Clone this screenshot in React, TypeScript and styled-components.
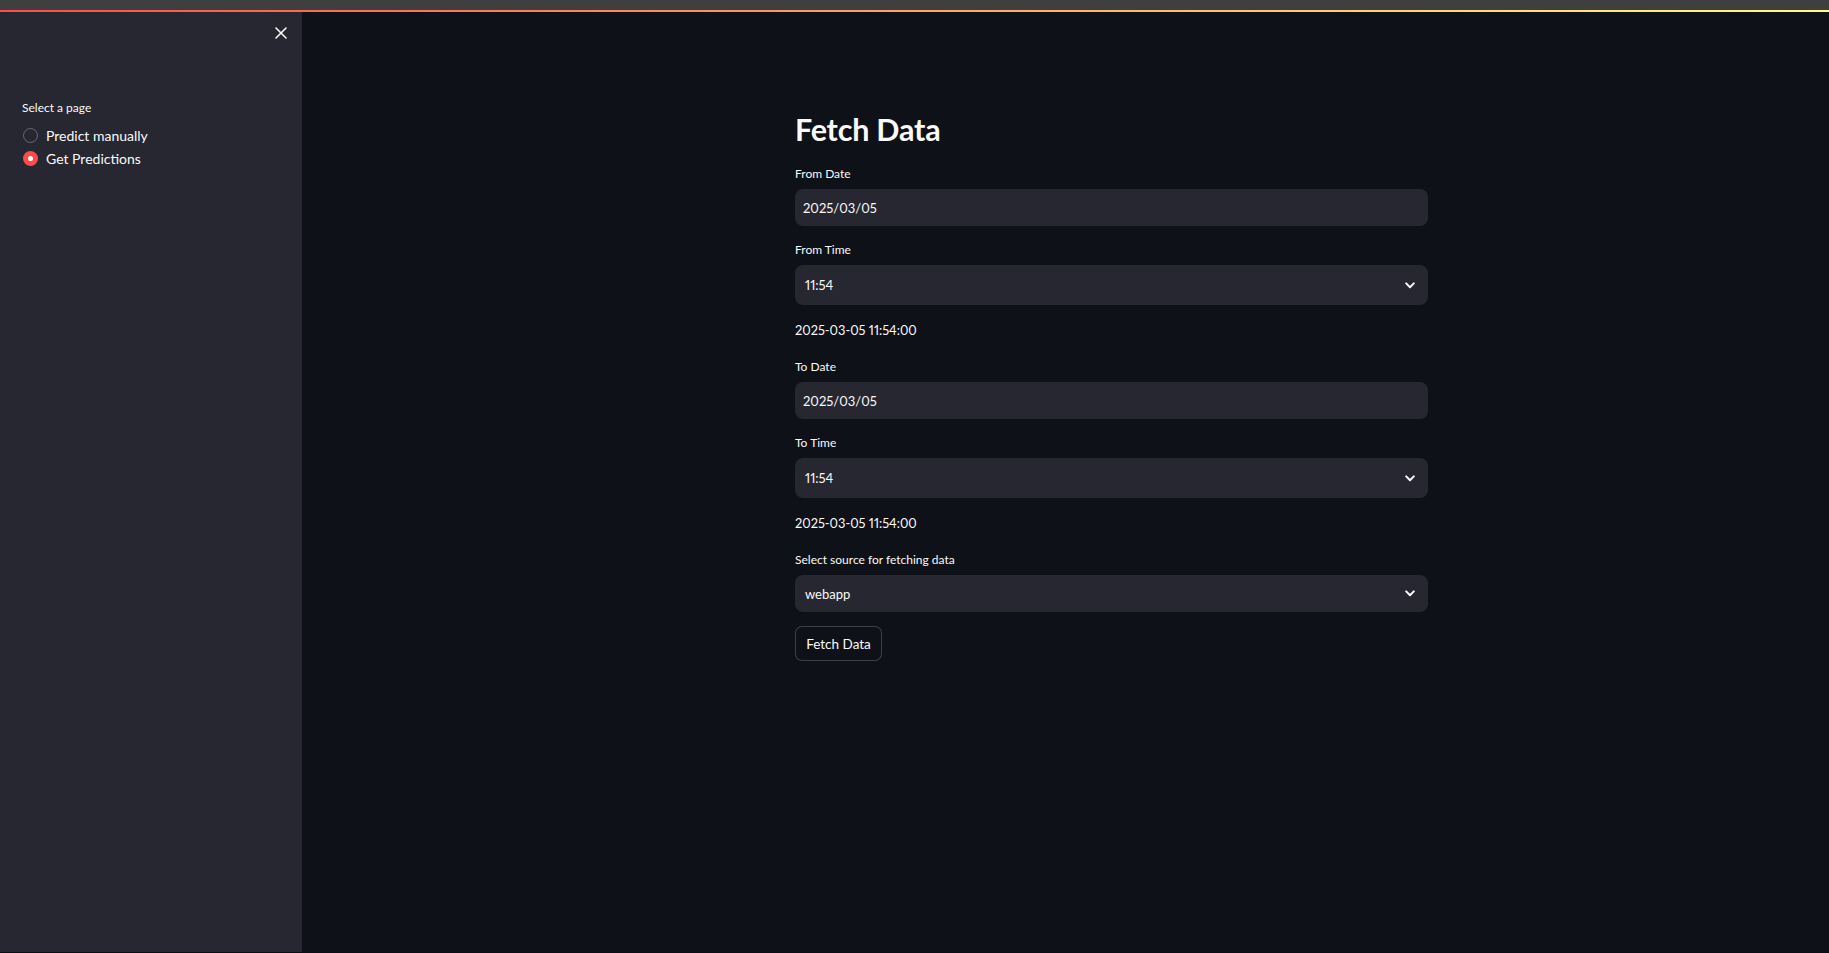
import React from "react";
import styled, { createGlobalStyle } from "styled-components";

const Global = createGlobalStyle`
  html, body { margin: 0; padding: 0; background: #0e1117; }
  body {
    font-family: Lato, "Noto Sans", sans-serif;
    color: #fafafa;
    font-variant-numeric: proportional-nums;
  }
  * { box-sizing: border-box; }
`;

const Shell = styled.div`
  display: flex;
  flex-direction: column;
  height: 953px;
  overflow: hidden;
`;

const Chrome = styled.div`
  height: 10px;
  background: #3f3f3f;
  flex: none;
`;

const Decoration = styled.div`
  height: 2px;
  flex: none;
  background: linear-gradient(90deg, #ff4b4b, #fffd80);
`;

const Body = styled.div`
  flex: 1;
  display: flex;
  min-height: 0;
  border-bottom: 1px solid #0b0d12;
`;

const Sidebar = styled.aside`
  width: 302px;
  flex: none;
  background: #262730;
  display: flex;
  flex-direction: column;
  padding: 0 0 0 22px;
`;

const SidebarHeader = styled.div`
  display: flex;
  justify-content: flex-end;
  padding: 2px 2px 0 0;
  height: 66px;
`;

const CloseButton = styled.button`
  width: 38px;
  height: 38px;
  border: none;
  background: transparent;
  color: #fafafa;
  display: flex;
  align-items: center;
  justify-content: center;
  padding: 0;
  cursor: pointer;
`;

const SideLabel = styled.div`
  font-size: 12px;
  line-height: 16px;
  color: #fafafa;
  margin-top: 22px;
  margin-bottom: 11px;
`;

const RadioList = styled.div`
  display: flex;
  flex-direction: column;
  gap: 6px;
`;

const RadioRow = styled.label`
  display: flex;
  align-items: center;
  gap: 8px;
  height: 17px;
  font-size: 14px;
  color: #fafafa;
  cursor: pointer;
`;

const RadioDot = styled.span<{ $checked?: boolean }>`
  width: 15px;
  height: 15px;
  border-radius: 50%;
  flex: none;
  margin-left: 1px;
  display: flex;
  align-items: center;
  justify-content: center;
  background: ${(p) => (p.$checked ? "#ff4b4b" : "transparent")};
  border: ${(p) => (p.$checked ? "none" : "1.5px solid rgba(250,250,250,0.3)")};
  &::after {
    content: "";
    display: ${(p) => (p.$checked ? "block" : "none")};
    width: 5px;
    height: 5px;
    border-radius: 50%;
    background: #fff;
  }
`;

const Main = styled.main`
  flex: 1;
  display: flex;
  justify-content: center;
  padding: 98px 0 0 92px;
`;

const Content = styled.div`
  width: 633px;
  display: flex;
  flex-direction: column;
  gap: 16px;
`;

const Title = styled.h1`
  margin: -2px 0 0;
  font-size: 30.5px;
  line-height: 42px;
  font-weight: 700;
  letter-spacing: -0.2px;
  color: #fafafa;
`;

const Field = styled.div`
  display: flex;
  flex-direction: column;
  gap: 7px;
`;

const Label = styled.div`
  font-size: 12px;
  line-height: 16px;
  color: #fafafa;
`;

const Control = styled.div<{ $h: number; $pad: number }>`
  height: ${(p) => p.$h}px;
  background: #262730;
  border-radius: 8px;
  display: flex;
  align-items: center;
  justify-content: space-between;
  padding: 0 13px 0 ${(p) => p.$pad}px;
  font-size: 13px;
  color: #fafafa;
`;

const Caption = styled.div`
  font-size: 12.8px;
  line-height: 18px;
  color: #fafafa;
  margin-bottom: 4px;
`;

const Button = styled.button`
  align-self: flex-start;
  height: 35px;
  width: 87px;
  margin-top: -2px;
  border: 1px solid rgba(250, 250, 250, 0.2);
  border-radius: 7px;
  background: #0e1117;
  color: #fafafa;
  font-family: inherit;
  font-size: 13.5px;
  padding: 0;
  cursor: pointer;
`;

const Chevron = () => (
  <svg width="10" height="7" viewBox="0 0 10 7" fill="none">
    <path d="M1.2 1.4 L5 5.2 L8.8 1.4" stroke="#fafafa" strokeWidth="2" strokeLinecap="round" strokeLinejoin="round" />
  </svg>
);

const CloseIcon = () => (
  <svg width="12" height="12" viewBox="0 0 12 12" fill="none">
    <path d="M1 1 L11 11 M11 1 L1 11" stroke="#fafafa" strokeWidth="1.6" strokeLinecap="round" />
  </svg>
);

export default function App() {
  return (
    <Shell>
      <Global />
      <Chrome />
      <Decoration />
      <Body>
        <Sidebar>
          <SidebarHeader>
            <CloseButton aria-label="Close sidebar">
              <CloseIcon />
            </CloseButton>
          </SidebarHeader>
          <SideLabel>Select a page</SideLabel>
          <RadioList>
            <RadioRow>
              <RadioDot />
              Predict manually
            </RadioRow>
            <RadioRow>
              <RadioDot $checked />
              Get Predictions
            </RadioRow>
          </RadioList>
        </Sidebar>
        <Main>
          <Content>
            <Title>Fetch Data</Title>
            <Field>
              <Label>From Date</Label>
              <Control $h={37} $pad={8}>2025/03/05</Control>
            </Field>
            <Field>
              <Label>From Time</Label>
              <Control $h={40} $pad={10}>
                11:54
                <Chevron />
              </Control>
            </Field>
            <Caption>2025-03-05 11:54:00</Caption>
            <Field>
              <Label>To Date</Label>
              <Control $h={37} $pad={8}>2025/03/05</Control>
            </Field>
            <Field>
              <Label>To Time</Label>
              <Control $h={40} $pad={10}>
                11:54
                <Chevron />
              </Control>
            </Field>
            <Caption>2025-03-05 11:54:00</Caption>
            <Field>
              <Label>Select source for fetching data</Label>
              <Control $h={37} $pad={10}>
                webapp
                <Chevron />
              </Control>
            </Field>
            <Button>Fetch Data</Button>
          </Content>
        </Main>
      </Body>
    </Shell>
  );
}
